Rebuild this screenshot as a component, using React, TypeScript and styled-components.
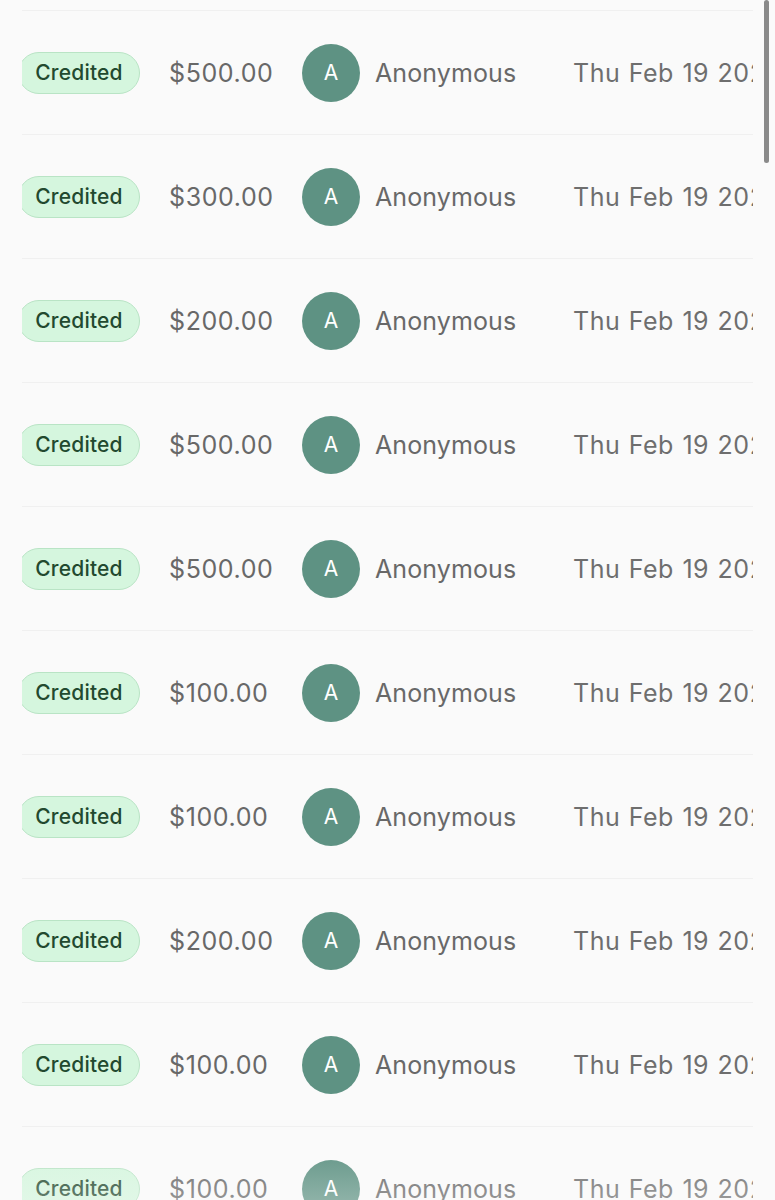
import styled, { createGlobalStyle } from 'styled-components'

const GlobalStyle = createGlobalStyle`
    html, body {
        margin: 0;
        padding: 0;
        background: #fafafa;
    }
    body {
        font-family: Inter, "Noto Sans", "Liberation Sans", sans-serif;
        -webkit-font-smoothing: antialiased;
    }
`

const Screen = styled.div`
    position: relative;
    height: 1200px;
    overflow: hidden;
    background: #fafafa;
`

const List = styled.div`
    margin: 10px 0 0 22px;
    width: 731px;
    overflow: hidden;
`

const Row = styled.div`
    display: grid;
    grid-template-columns: 151px 133px 73px 198px max-content;
    align-items: center;
    height: 123px;
    margin-left: -4px;
    border-top: 1px solid #f0f0f0;
    white-space: nowrap;
`

const Badge = styled.span`
    display: inline-flex;
    align-items: center;
    justify-content: center;
    box-sizing: border-box;
    width: 122px;
    height: 42px;
    border-radius: 21px;
    background: #d5f6de;
    border: 1.5px solid #b9e4c5;
    color: #22492f;
    font-size: 21px;
    font-weight: 500;
    letter-spacing: 0.2px;
`

const Amount = styled.span`
    font-size: 25px;
    letter-spacing: 0.6px;
    color: #686868;
`

const Avatar = styled.span`
    display: flex;
    align-items: center;
    justify-content: center;
    width: 58px;
    height: 58px;
    border-radius: 50%;
    background: #5e9283;
    color: #ffffff;
    font-size: 21px;
`

const Name = styled.span`
    font-size: 25px;
    letter-spacing: 0.1px;
    color: #686868;
`

const DateText = styled.span`
    font-size: 25px;
    letter-spacing: 0.5px;
    word-spacing: 1px;
    color: #6e6e6e;
`

const Scrollbar = styled.div`
    position: absolute;
    top: 0;
    left: 764px;
    width: 5px;
    height: 163px;
    border-radius: 3px;
    background: #8a8a8a;
`

const Fade = styled.div`
    position: absolute;
    left: 0;
    right: 0;
    bottom: 0;
    height: 60px;
    background: linear-gradient(to bottom, rgba(250, 250, 250, 0), rgba(250, 250, 250, 0.3));
    pointer-events: none;
`

const amounts = [500, 300, 200, 500, 500, 100, 100, 200, 100, 100]

const App: React.FC = () => {
    return (
        <Screen>
            <GlobalStyle />
            <List>
                {amounts.map((amount, i) => (
                    <Row key={i}>
                        <Badge>Credited</Badge>
                        <Amount>${amount.toFixed(2)}</Amount>
                        <Avatar>A</Avatar>
                        <Name>Anonymous</Name>
                        <DateText>Thu Feb 19 2026 10:24:31</DateText>
                    </Row>
                ))}
            </List>
            <Scrollbar />
            <Fade />
        </Screen>
    )
}

export default App
